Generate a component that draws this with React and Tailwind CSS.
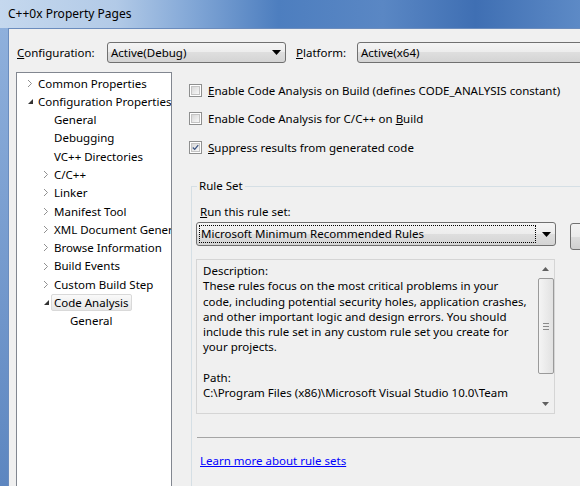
import React from "react";

const TREE = [
  { label: "Common Properties", level: 1, arrow: "closed" },
  { label: "Configuration Properties", level: 1, arrow: "open" },
  { label: "General", level: 2 },
  { label: "Debugging", level: 2 },
  { label: "VC++ Directories", level: 2 },
  { label: "C/C++", level: 2, arrow: "closed" },
  { label: "Linker", level: 2, arrow: "closed" },
  { label: "Manifest Tool", level: 2, arrow: "closed" },
  { label: "XML Document Generator", level: 2, arrow: "closed" },
  { label: "Browse Information", level: 2, arrow: "closed" },
  { label: "Build Events", level: 2, arrow: "closed" },
  { label: "Custom Build Step", level: 2, arrow: "closed" },
  { label: "Code Analysis", level: 2, arrow: "open", selected: true },
  { label: "General", level: 3 },
];

const DESC = [
  "Description:",
  "These rules focus on the most critical problems in your",
  "code, including potential security holes, application crashes,",
  "and other important logic and design errors. You should",
  "include this rule set in any custom rule set you create for",
  "your projects.",
  "\u00a0",
  "Path:",
  "C:\\Program Files (x86)\\Microsoft Visual Studio 10.0\\Team",
];

function DownArrow() {
  return (
    <svg width="9" height="5" viewBox="0 0 9 5">
      <polygon points="0,0 9,0 4.5,5" fill="#000" />
    </svg>
  );
}

function Combo({ className, children }) {
  return (
    <div
      className={`flex items-center shrink-0 border border-[#707070] rounded-[3px] bg-[linear-gradient(#f4f4f4_0%,#ececec_50%,#dedede_50%,#d4d4d4_100%)] ${className}`}
    >
      <div className="flex-1 min-w-0 whitespace-nowrap">{children}</div>
      <div className="w-[17px] flex justify-center">
        <DownArrow />
      </div>
    </div>
  );
}

function CheckBox({ checked }) {
  return (
    <div className="w-[13px] h-[13px] border border-[#8e8f8f] bg-white p-[1px] shrink-0">
      <div className="w-full h-full border border-[#c4c4c4] bg-[linear-gradient(135deg,#d8d8d8,#f8f8f8)] flex items-center justify-center">
        {checked && (
          <svg width="9" height="9" viewBox="0 0 9 9">
            <path d="M1 4.5 L3.5 7 L8 1.5" stroke="#3a5280" strokeWidth="1.6" fill="none" />
          </svg>
        )}
      </div>
    </div>
  );
}

function TreeArrow({ kind }) {
  if (kind === "closed") {
    return (
      <svg width="6" height="9" viewBox="0 0 6 9">
        <path d="M1 1 L4.5 4.5 L1 8" stroke="#909090" strokeWidth="1" fill="none" />
      </svg>
    );
  }
  if (kind === "open") {
    return (
      <svg width="7" height="7" viewBox="0 0 7 7">
        <polygon points="6,1 6,6 1,6" fill="#333" />
      </svg>
    );
  }
  return null;
}

export default function App() {
  return (
    <div className="w-[580px] h-[486px] overflow-hidden flex flex-col font-['Noto_Sans',sans-serif] text-[11.5px] text-black">
      {/* title bar */}
      <div className="h-[28px] shrink-0 flex items-center pl-[8px] bg-[linear-gradient(90deg,#c5d8ee_0%,#b2cae7_20%,#86aad8_32%,#4d7ebf_48%,#5a87c4_66%,#3f6fb3_82%,#5d8ac6_100%)]">
        <span className="text-[12px]">C++0x Property Pages</span>
      </div>

      <div className="flex flex-1 min-h-0">
        {/* window frame */}
        <div className="w-[8px] shrink-0 bg-[linear-gradient(#8fb0dc,#5d86c0)]" />

        <div className="flex-1 min-w-0 bg-[#f0f0f0] border-l border-t border-[#6b8cbd] flex flex-col overflow-hidden">
          {/* configuration row */}
          <div className="flex items-center mt-[13px] pl-[8px] h-[21px] shrink-0">
            <span className="w-[90px] shrink-0">
              <u>C</u>onfiguration:
            </span>
            <Combo className="w-[179px] h-[21px] pl-[3px]">Active(Debug)</Combo>
            <span className="ml-[10px] w-[61px] shrink-0">
              <u>P</u>latform:
            </span>
            <Combo className="w-[260px] h-[21px] pl-[3px]">Active(x64)</Combo>
          </div>

          <div className="flex flex-1 min-h-0 mt-[9px]">
            {/* tree */}
            <div className="ml-[7px] w-[156px] shrink-0 bg-white border border-[#828790] border-b-0 overflow-hidden pt-[1px]">
              {TREE.map((item, i) => (
                <div
                  key={i}
                  className="flex items-center h-[18.3px] whitespace-nowrap"
                  style={{ paddingLeft: 5 + (item.level - 1) * 16 }}
                >
                  <div className="w-[16px] shrink-0 flex justify-center">
                    <TreeArrow kind={item.arrow} />
                  </div>
                  <span
                    className={
                      item.selected
                        ? "-ml-[3px] px-[2px] h-[17px] flex items-center border border-[#d9d9d9] rounded-[2px] bg-[linear-gradient(#fafafa,#e6e6e6)]"
                        : ""
                    }
                  >
                    {item.label}
                  </span>
                </div>
              ))}
            </div>

            {/* right panel */}
            <div className="flex-1 min-w-0 overflow-hidden flex flex-col">
              <div className="flex items-center pl-[17px] mt-[12px] h-[13px] whitespace-nowrap">
                <CheckBox />
                <span className="ml-[6px]">
                  <u>E</u>nable Code Analysis on Build (defines CODE_ANALYSIS constant)
                </span>
              </div>
              <div className="flex items-center pl-[17px] mt-[15px] h-[13px] whitespace-nowrap">
                <CheckBox />
                <span className="ml-[6px]">
                  Enable Code Analysis for C/C++ on <u>B</u>uild
                </span>
              </div>
              <div className="flex items-center pl-[17px] mt-[16px] h-[13px] whitespace-nowrap">
                <CheckBox checked />
                <span className="ml-[6px]">
                  <u>S</u>uppress results from generated code
                </span>
              </div>

              <fieldset className="ml-[19px] mt-[24px] w-[420px] flex-1 border-l border-t border-[#d5dfe5] min-h-[320px]">
                <legend className="ml-[5px] px-[2px] leading-[16px]">Rule Set</legend>
                <div className="pl-[8px] mt-[10px] leading-[16px]">
                  <u>R</u>un this rule set:
                </div>
                <div className="flex items-start ml-[4px] mt-[2px]">
                  <Combo className="w-[360px] h-[24px] pl-[2px]">
                    <span className="inline-block border border-dotted border-black px-[1px] w-[337px] leading-[16px]">
                      Microsoft Minimum Recommended Rules
                    </span>
                  </Combo>
                  <div className="ml-[14px] mt-[1px] w-[75px] h-[27px] shrink-0 border border-[#707070] rounded-[3px] bg-[linear-gradient(#f2f2f2_0%,#ebebeb_50%,#dddddd_50%,#cfcfcf_100%)]" />
                </div>

                <div className="ml-[4px] mt-[9px] w-[359px] h-[155px] border border-[#d5d5d5] flex">
                  <div className="flex-1 pl-[6px] pt-[3px] leading-[15.3px] whitespace-nowrap overflow-hidden">
                    {DESC.map((line, i) => (
                      <div key={i}>{line}</div>
                    ))}
                  </div>
                  {/* scrollbar */}
                  <div className="w-[17px] flex flex-col items-center bg-[#f0f0f0]">
                    <div className="h-[18px] flex items-center justify-center">
                      <svg width="7" height="4" viewBox="0 0 7 4">
                        <polygon points="3.5,0 7,4 0,4" fill="#606060" />
                      </svg>
                    </div>
                    <div className="w-[16px] h-[96px] border border-[#9a9a9a] rounded-[2px] bg-[linear-gradient(90deg,#f4f4f4,#e2e2e2)] flex flex-col items-center justify-center gap-[2px]">
                      <div className="w-[6px] h-[1px] bg-[#8a8a8a]" />
                      <div className="w-[6px] h-[1px] bg-[#8a8a8a]" />
                      <div className="w-[6px] h-[1px] bg-[#8a8a8a]" />
                    </div>
                    <div className="flex-1" />
                    <div className="h-[18px] flex items-center justify-center">
                      <svg width="7" height="4" viewBox="0 0 7 4">
                        <polygon points="0,0 7,0 3.5,4" fill="#606060" />
                      </svg>
                    </div>
                  </div>
                </div>

                <div className="ml-[5px] mt-[23px] h-[1px] bg-[#a5a5a5]" />

                <div className="pl-[8px] mt-[15px] leading-[16px]">
                  <span className="text-[#0000ff] underline">Learn more about rule sets</span>
                </div>
              </fieldset>
            </div>
          </div>
        </div>
      </div>
    </div>
  );
}
